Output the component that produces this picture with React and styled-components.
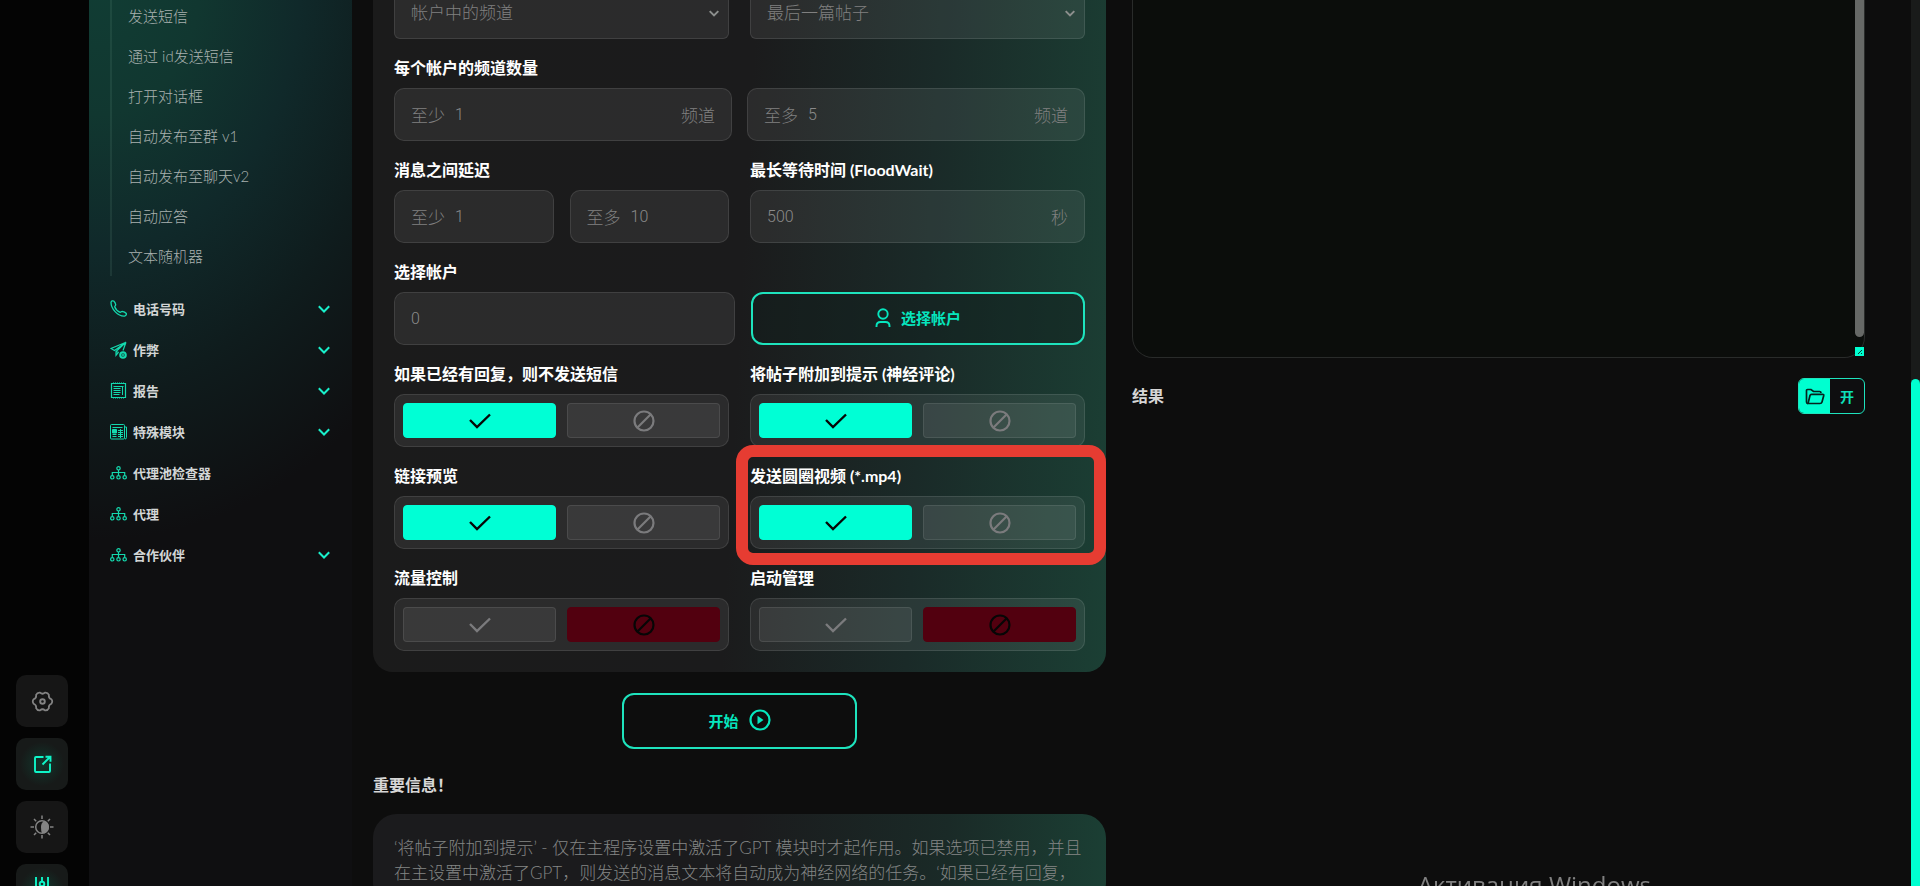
import { useState } from "react";
import styled, { createGlobalStyle } from "styled-components";

const GlobalStyle = createGlobalStyle`
  * {
    box-sizing: border-box;
  }

  body {
    margin: 0;
    background: #0d0d0d;
    overflow: hidden;
    font-family: Lato, "Noto Sans CJK SC", sans-serif;
  }

  button,
  input,
  select,
  textarea {
    font-family: inherit;
  }
`;

const Page = styled.div`
  display: flex;
  height: 100vh;
  overflow: hidden;
`;

const Rail = styled.div`
  flex: none;
  width: 89px;
  height: calc(100vh + 46px);
  padding: 0 0 16px 16px;
  display: flex;
  flex-direction: column;
  justify-content: flex-end;
  gap: 11px;
  background: #040404;
`;

const RailButton = styled.button`
  width: 52px;
  height: 52px;
  padding: 0;
  display: flex;
  align-items: center;
  justify-content: center;
  border: none;
  border-radius: 10px;
  background: ${({ $active }) =>
    $active ? "radial-gradient(circle, #12362c 0%, #171a19 60%)" : "#161616"};
  color: ${({ $active }) => ($active ? "#0ff5c8" : "#848484")};
`;

const Sidebar = styled.nav`
  flex: none;
  width: 263px;
  background: radial-gradient(
    ellipse 420px 560px at 10px -20px,
    #113d34 0%,
    #113730 24%,
    #10292a 48%,
    #0f1c1d 72%,
    #0f0f11 100%
  );
`;

const SubList = styled.div`
  margin: -4px 0 12px 21px;
  padding-left: 16px;
  border-left: 2px solid rgba(110, 160, 140, 0.14);
`;

const SubLink = styled.a`
  display: block;
  line-height: 40px;
  font-size: 15px;
  font-weight: 300;
  color: #a9b1af;
  text-decoration: none;
`;

const GroupLink = styled.a`
  display: flex;
  align-items: center;
  height: 41px;
  padding: 0 22px 0 21px;
  gap: 6px;
  font-size: 13px;
  font-weight: 700;
  color: #d3d6d6;
  text-decoration: none;

  svg {
    flex: none;
    color: #14d9ae;
  }

  svg:nth-of-type(2) {
    margin-left: auto;
    color: #19f0cb;
  }
`;

const Main = styled.main`
  flex: 1;
  min-width: 0;
  display: grid;
  grid-template-columns: minmax(0, 1fr) minmax(0, 1fr);
  gap: 26px;
  padding: 0 46px 0 21px;
`;

const Column = styled.div`
  min-width: 0;
`;

const Card = styled.form`
  margin-top: -35px;
  padding: 21px;
  display: flex;
  flex-direction: column;
  gap: 16px;
  border-radius: 20px;
  background: linear-gradient(93deg, #1b1b1b 0%, #1b1b1c 50%, #1a2a28 74%, #1b3f34 100%);
`;

const Row = styled.div`
  display: grid;
  grid-template-columns: ${({ $columns }) => $columns || "minmax(0, 1fr) minmax(0, 1fr)"};
  align-items: end;
  gap: ${({ $gap }) => $gap || 21}px;
`;

const Field = styled.div`
  position: relative;
  min-width: 0;
`;

const FieldTitle = styled.div`
  margin-bottom: 8px;
  padding-top: 1px;
  font-size: 16px;
  line-height: 24px;
  font-weight: 700;
  color: #fff;
  white-space: nowrap;
`;

const Highlight = styled.span`
  position: absolute;
  inset: -18px -21px -16px -14px;
  border: 12px solid #e63c32;
  border-radius: 17px;
  pointer-events: none;
`;

const InputBox = styled.label`
  display: flex;
  align-items: center;
  gap: 10px;
  height: 53px;
  padding: 0 16px 1px;
  border: 1px solid rgba(255, 255, 255, 0.1);
  border-radius: 10px;
  background: rgba(255, 255, 255, 0.07);
  font-size: 17px;
  font-weight: 300;
  color: #808080;

  span {
    flex: none;
  }

  input {
    flex: 1;
    width: 0;
    min-width: 0;
    padding: 0;
    border: none;
    outline: none;
    background: none;
    font-family: Roboto, sans-serif;
    font-size: 16px;
    font-weight: 300;
    color: #8a8a8a;
  }
`;

const SelectBox = styled.div`
  position: relative;

  select {
    display: block;
    width: 100%;
    height: 53px;
    padding: 0 16px 1px;
    appearance: none;
    border: 1px solid rgba(255, 255, 255, 0.1);
    border-radius: 6px;
    background: rgba(255, 255, 255, 0.07);
    font-size: 17px;
    font-weight: 300;
    color: #808080;
  }

  svg {
    position: absolute;
    top: 24px;
    right: 10px;
    color: #8c8f8d;
    pointer-events: none;
  }
`;

const OutlineButton = styled.button`
  display: flex;
  align-items: center;
  justify-content: center;
  gap: ${({ $gap }) => $gap || 10}px;
  width: ${({ $width }) => $width || "100%"};
  height: ${({ $height }) => $height || 53}px;
  padding: 0 0 2px;
  border: 2px solid #1ee3bd;
  border-radius: 12px;
  background: ${({ $tinted }) => ($tinted ? "rgba(14, 30, 28, 0.4)" : "transparent")};
  font-size: 15px;
  font-weight: 700;
  color: #06e6be;
`;

const Segments = styled.div`
  display: grid;
  grid-template-columns: 1fr 1fr;
  gap: 11px;
  height: 53px;
  padding: 8px;
  border: 1px solid rgba(255, 255, 255, 0.1);
  border-radius: 10px;
  background: rgba(255, 255, 255, 0.07);
`;

const Segment = styled.button`
  display: flex;
  align-items: center;
  justify-content: center;
  padding: 0;
  border: 1px solid ${({ $fill }) => $fill || "rgba(255, 255, 255, 0.09)"};
  border-radius: 4px;
  background: ${({ $fill }) => $fill || "rgba(255, 255, 255, 0.07)"};
  color: ${({ $fill }) => ($fill ? "#060606" : "#7b7b7d")};
`;

const StartWrap = styled.div`
  display: flex;
  justify-content: center;
  margin: 21px 0 24px;
`;

const Heading = styled.h2`
  margin: 0;
  font-size: 16px;
  line-height: 24px;
  font-weight: 700;
  color: #d6d6d6;
`;

const InfoCard = styled.section`
  margin-top: 17px;
  padding: 21px;
  border-radius: 24px;
  background: linear-gradient(93deg, #1b1b1d 0%, #1b1b1d 50%, #1a2a27 78%, #1b3f34 100%);

  p {
    margin: 0;
    font-size: 17px;
    line-height: 25px;
    font-weight: 300;
    color: #848685;
  }
`;

const LogBox = styled.div`
  position: relative;
  height: 358px;

  textarea {
    display: block;
    width: 100%;
    height: 100%;
    border: 1px solid #292b2a;
    border-top: none;
    border-radius: 0 0 21px 21px;
    outline: none;
    resize: none;
    background: #0b0d0b;
    color: #999;
  }
`;

const LogThumb = styled.span`
  position: absolute;
  top: 0;
  right: 1px;
  width: 9px;
  height: 337px;
  border-radius: 0 0 5px 5px;
  background: #666866;
`;

const ResizeGrip = styled.span`
  position: absolute;
  right: 1px;
  bottom: 2px;
  width: 9px;
  height: 9px;
  background: #00ffd0;
  color: #08382e;

  svg {
    display: block;
  }
`;

const ResultBar = styled.div`
  display: flex;
  align-items: center;
  justify-content: space-between;
  margin-top: 20px;
`;

const OpenButton = styled.button`
  display: flex;
  width: 67px;
  height: 36px;
  padding: 0;
  overflow: hidden;
  border: 1px solid #1ee3bd;
  border-radius: 6px;
  background: #0e0e10;
  font-size: 14px;
  font-weight: 700;
  color: #0de0ba;

  span {
    flex: 1;
    height: 100%;
    display: flex;
    align-items: center;
    justify-content: center;
  }

  span:first-child {
    flex: none;
    width: 31px;
    background: #00ffd0;
    color: #06231d;
  }
`;

const ScrollTrack = styled.div`
  flex: none;
  width: 9px;
  padding-top: 379px;
  background: #191b1a;

  &::after {
    content: "";
    display: block;
    height: 100%;
    border-radius: 5px 5px 0 0;
    background: #00ffd0;
  }
`;

const Watermark = styled.div`
  position: fixed;
  right: 269px;
  bottom: -16px;
  font-family: "Open Sans", "Noto Sans", sans-serif;
  font-size: 24px;
  line-height: 34px;
  color: #808080;
  pointer-events: none;
`;

const Svg = ({ w = 24, h, box, sw = 2, children }) => (
  <svg
    width={w}
    height={h || w}
    viewBox={box || `0 0 ${w} ${h || w}`}
    fill="none"
    stroke="currentColor"
    strokeWidth={sw}
    aria-hidden="true"
  >
    {children}
  </svg>
);

const Chevron = ({ w = 12, sw = 2 }) => (
  <Svg w={w} h={(w * 2) / 3} box="0 0 12 8" sw={sw}>
    <path d="M.8 1.300l5.200 5.200 5.200-5.200" />
  </Svg>
);

const CheckIcon = () => (
  <Svg w={22} h={16} sw={2.400}>
    <path d="M1 7l7 7L21 1.500" />
  </Svg>
);

const BanIcon = () => (
  <Svg w={22} sw={2.200}>
    <circle cx="11" cy="11" r="9.500" />
    <path d="M4.500 17.500l13-13" />
  </Svg>
);

const PhoneIcon = () => (
  <Svg w={17} box="0 0 17 17" sw={1.300}>
    <path d="M1 2.200C1.400 1 2.600.5 3.700 1c1.200 1 1.800 2.500 2 3.700.1.8-.9 1.300-1 2 .8 2.300 3 4.600 5.500 5.600.8 0 1.200-1 2-1 1.600.2 3.200 1 4.100 2.200.4 1.100-.6 2.300-1.800 2.600C8 16.500 1 9 1 2.200z" />
  </Svg>
);

const BoostIcon = () => (
  <Svg w={17} h={18} sw={1.200}>
    <path d="M16 1.200L1 7.500l3.500 2L16 1.200 6 10.500v3.800l2-2.500M16 1.200l-3 8.300M6 10.500l3 1" />
    <circle cx="13" cy="14" r="2.800" strokeWidth="2" />
    <path d="M13 12.500v3M11.500 14h3" strokeWidth="1" />
  </Svg>
);

const ReportIcon = () => (
  <Svg w={17} sw={1}>
    <path d="M1.500 1.500h14v14h-14z" strokeWidth="1.200" />
    <path d="M3 1h12M3 16h12" strokeDasharray="1 1" />
    <path d="M3.500 4.500h10M3.500 6.500h7M3.500 8.500h7M3.500 10.500h7M3.500 12.500h6M12.500 4v9" />
  </Svg>
);

const ModuleIcon = () => (
  <Svg w={17} h={16} sw={1}>
    <rect x=".5" y=".5" width="14" height="14.500" rx="1" />
    <path d="M14.500 3h2v10.500q0 1.500-1.500 1.500M2.500 3.500h10M8 6.500h5M8 8.500h5M8 10.500h5M8 12.500h5M2.500 10.500h4M2.500 12.500h4M10.500 5v9" />
    <path d="M2.500 5.500h4v3.500h-4z" fill="currentColor" />
  </Svg>
);

const ProxyIcon = () => (
  <Svg w={17} h={14} sw={1.200}>
    <circle cx="8.500" cy="2.300" r="1.700" />
    <circle cx="2.300" cy="11.300" r="1.700" />
    <circle cx="8.500" cy="11.300" r="1.700" />
    <circle cx="14.700" cy="11.300" r="1.700" />
    <path d="M8.500 4v5.500M2.300 9.500V6.500h12.400v3" />
  </Svg>
);

const GearIcon = () => (
  <Svg w={23} box="0 0 24 24" sw={1.800}>
    <path d="M21.300 9.700Q23 12 21.300 14.300Q18.100 15.500 18.700 18.900Q17.500 21.500 14.600 21.200Q12 19 9.400 21.200Q6.500 21.500 5.300 18.900Q5.900 15.500 2.700 14.300Q1 12 2.700 9.700Q5.900 8.500 5.300 5.100Q6.500 2.500 9.400 2.800Q12 5 14.600 2.800Q17.500 2.500 18.700 5.100Q18.100 8.500 21.300 9.700Z" />
    <circle cx="12" cy="12" r="2.400" strokeWidth="2" />
  </Svg>
);

const ExportIcon = () => (
  <Svg w={19} sw={1.900}>
    <path d="M10.500 2H3Q2 2 2 3v13q0 1 1 1h13q1 0 1-1V8.500" />
    <path d="M9.500 9.500L17 2M12.500 1.700h5v5" />
  </Svg>
);

const ThemeIcon = () => (
  <Svg w={24} sw={1.500}>
    <circle cx="12" cy="12" r="6.300" />
    <path d="M12 18.300A6.300 6.300 0 0 0 17.500 8q-2-2.300-4-1.500-2.500 1.500-2.500 5.500t1 6.300z" fill="currentColor" stroke="none" />
    <path d="M12 .500v3.500M12 20v3.500M.500 12H4M20 12h3.500M4 4l2.200 2.200M20 4l-2.200 2.200M4 20l2.200-2.200M20 20l-2.200-2.200" />
  </Svg>
);

const SlidersIcon = () => (
  <Svg w={16} h={26} sw={1.900}>
    <path d="M2 0v14M2 19v7M8 0v4.500M8 9.500V26M14 0v14M14 19v7" />
    <circle cx="8" cy="7" r="2.300" />
    <circle cx="2" cy="17" r="1.500" />
    <circle cx="14" cy="17" r="1.500" />
  </Svg>
);

const UserIcon = () => (
  <Svg w={16} h={20} sw={1.900}>
    <circle cx="8" cy="6" r="4.700" />
    <path d="M1.500 19v-1q0-4 4-4h5q4 0 4 4v1" />
  </Svg>
);

const PlayIcon = () => (
  <Svg w={22} sw={2.200}>
    <circle cx="11" cy="11" r="9.500" />
    <path d="M8.500 6.800v8.400l6-4.200z" fill="currentColor" stroke="none" />
  </Svg>
);

const FolderIcon = () => (
  <Svg w={20} h={17} sw={1.700}>
    <path d="M3 15.500Q1.500 15.500 1.500 14V2.500Q1.500 1.500 2.500 1.500h3.500l2.500 2h6q1.500 0 1.500 1.500" />
    <path d="M3 15.500L5 7.500Q5.300 6.300 6.500 6.300H17.500Q19 6.300 18.700 7.700L17 14Q16.600 15.500 15 15.500H3z" />
  </Svg>
);

const subItems = [
  "发送短信",
  "通过 id发送短信",
  "打开对话框",
  "自动发布至群 v1",
  "自动发布至聊天v2",
  "自动应答",
  "文本随机器",
];

const groups = [
  { title: "电话号码", Icon: PhoneIcon, open: true },
  { title: "作弊", Icon: BoostIcon, open: true },
  { title: "报告", Icon: ReportIcon, open: true },
  { title: "特殊模块", Icon: ModuleIcon, open: true },
  { title: "代理池检查器", Icon: ProxyIcon },
  { title: "代理", Icon: ProxyIcon },
  { title: "合作伙伴", Icon: ProxyIcon, open: true },
];

const NumberInput = ({ prefix, suffix, value, name }) => (
  <InputBox>
    {prefix && <span>{prefix}</span>}
    <input type="text" name={name} aria-label={name} defaultValue={value} />
    {suffix && <span>{suffix}</span>}
  </InputBox>
);

const Dropdown = ({ label, value }) => (
  <SelectBox>
    <select aria-label={label} defaultValue={value}>
      <option>{value}</option>
    </select>
    <Chevron w={10} sw={2.400} />
  </SelectBox>
);

const Toggle = ({ title, initial, highlight }) => {
  const [on, setOn] = useState(initial);

  return (
    <Field>
      <FieldTitle>{title}</FieldTitle>
      <Segments role="group" aria-label={title}>
        <Segment
          type="button"
          aria-label="on"
          aria-pressed={on}
          $fill={on ? "#00ffd5" : ""}
          onClick={() => setOn(true)}
        >
          <CheckIcon />
        </Segment>
        <Segment
          type="button"
          aria-label="off"
          aria-pressed={!on}
          $fill={on ? "" : "#52000f"}
          onClick={() => setOn(false)}
        >
          <BanIcon />
        </Segment>
      </Segments>
      {highlight && <Highlight />}
    </Field>
  );
};

const App = () => {
  return (
    <Page>
      <GlobalStyle />
      <Rail>
        <RailButton type="button" aria-label="settings">
          <GearIcon />
        </RailButton>
        <RailButton type="button" aria-label="export" $active>
          <ExportIcon />
        </RailButton>
        <RailButton type="button" aria-label="theme">
          <ThemeIcon />
        </RailButton>
        <RailButton type="button" aria-label="filters" $active>
          <SlidersIcon />
        </RailButton>
      </Rail>

      <Sidebar>
        <SubList>
          {subItems.map((item) => (
            <SubLink href="#" key={item}>
              {item}
            </SubLink>
          ))}
        </SubList>
        {groups.map(({ title, Icon, open }) => (
          <GroupLink href="#" key={title}>
            <Icon />
            {title}
            {open && <Chevron />}
          </GroupLink>
        ))}
      </Sidebar>

      <Main>
        <Column>
          <Card>
            <Row>
              <Dropdown label="source" value="帐户中的频道" />
              <Dropdown label="post" value="最后一篇帖子" />
            </Row>

            <Field>
              <FieldTitle>每个帐户的频道数量</FieldTitle>
              <Row $gap={15}>
                <NumberInput name="channelsMin" prefix="至少" value="1" suffix="频道" />
                <NumberInput name="channelsMax" prefix="至多" value="5" suffix="频道" />
              </Row>
            </Field>

            <Row>
              <Field>
                <FieldTitle>消息之间延迟</FieldTitle>
                <Row $gap={16}>
                  <NumberInput name="delayMin" prefix="至少" value="1" />
                  <NumberInput name="delayMax" prefix="至多" value="10" />
                </Row>
              </Field>
              <Field>
                <FieldTitle>最长等待时间 (FloodWait)</FieldTitle>
                <NumberInput name="floodWait" value="500" suffix="秒" />
              </Field>
            </Row>

            <Row $columns="341fr 334fr" $gap={16}>
              <Field>
                <FieldTitle>选择帐户</FieldTitle>
                <NumberInput name="accounts" value="0" />
              </Field>
              <OutlineButton type="button" $tinted>
                <UserIcon />
                选择帐户
              </OutlineButton>
            </Row>

            <Row>
              <Toggle title="如果已经有回复，则不发送短信" initial={true} />
              <Toggle title="将帖子附加到提示 (神经评论)" initial={true} />
            </Row>
            <Row>
              <Toggle title="链接预览" initial={true} />
              <Toggle title="发送圆圈视频 (*.mp4)" initial={true} highlight />
            </Row>
            <Row>
              <Toggle title="流量控制" initial={false} />
              <Toggle title="启动管理" initial={false} />
            </Row>
          </Card>

          <StartWrap>
            <OutlineButton type="button" $width="235px" $height={56}>
              开始
              <PlayIcon />
            </OutlineButton>
          </StartWrap>

          <Heading>重要信息！</Heading>
          <InfoCard>
            <p>
              ‘将帖子附加到提示’ - 仅在主程序设置中激活了GPT 模块时才起作用。如果选项已禁用，并且在主设置中激活了GPT，则发送的消息文本将自动成为神经网络的任务。‘如果已经有回复，
            </p>
          </InfoCard>
        </Column>

        <Column>
          <LogBox>
            <textarea aria-label="log" />
            <LogThumb />
            <ResizeGrip>
              <Svg w={9} sw={1}>
                <path d="M3 7l4-4M6 7l1-1" />
              </Svg>
            </ResizeGrip>
          </LogBox>
          <ResultBar>
            <Heading>结果</Heading>
            <OpenButton type="button">
              <span>
                <FolderIcon />
              </span>
              <span>开</span>
            </OpenButton>
          </ResultBar>
        </Column>
      </Main>

      <ScrollTrack />
      <Watermark>Активация Windows</Watermark>
    </Page>
  );
};

export default App;
